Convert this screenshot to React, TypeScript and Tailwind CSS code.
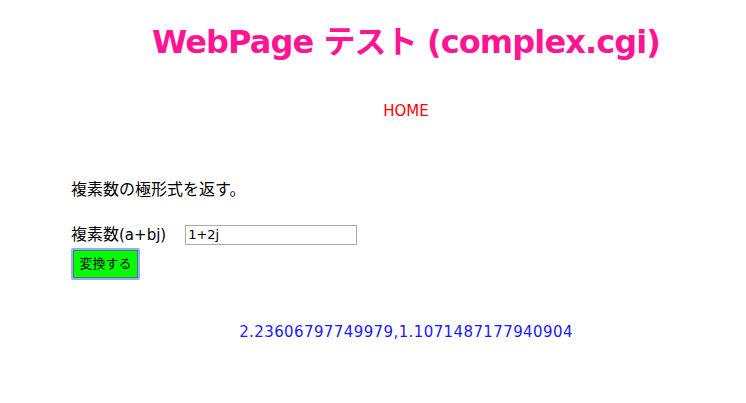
export default function App() {
  const font = { fontFamily: '"DejaVu Sans", "Noto Sans CJK JP", sans-serif' };
  return (
    <div className="w-[746px] h-[403px] bg-white pl-[71px] pr-[5px]" style={font}>
      <h1 className="pt-[16px] text-center text-[32px] font-bold leading-[52px] tracking-[-0.9px] text-[#ff1493]">
        WebPage テスト (complex.cgi)
      </h1>
      <div className="mt-[32px] text-center text-[15px] leading-[22px] text-[#ff0000]">HOME</div>
      <p className="mt-[57px] text-[16px] leading-[22px] text-black">複素数の極形式を返す。</p>
      <div className="mt-[23px] flex items-center text-[15px] leading-[22px] text-black">
        <span>
          <span className="text-[16px]">複素数</span>(a+bj)
        </span>
        <input
          defaultValue="1+2j"
          className="ml-[19px] h-[20px] w-[172px] border border-[#a9a9a9] px-[2px] text-[13px] text-black outline-none"
        />
      </div>
      <button className="mt-[2px] h-[32px] w-[69px] rounded-[2px] border-2 border-[#8ab4f8] bg-[#00ff00] text-[13px] text-black shadow-[inset_0_0_0_1px_#6b6b6b]">
        変換する
      </button>
      <div className="mt-[41px] text-center text-[15px] leading-[22px] tracking-[0.4px] text-[#1a1aff]">
        2.23606797749979,1.1071487177940904
      </div>
    </div>
  );
}
